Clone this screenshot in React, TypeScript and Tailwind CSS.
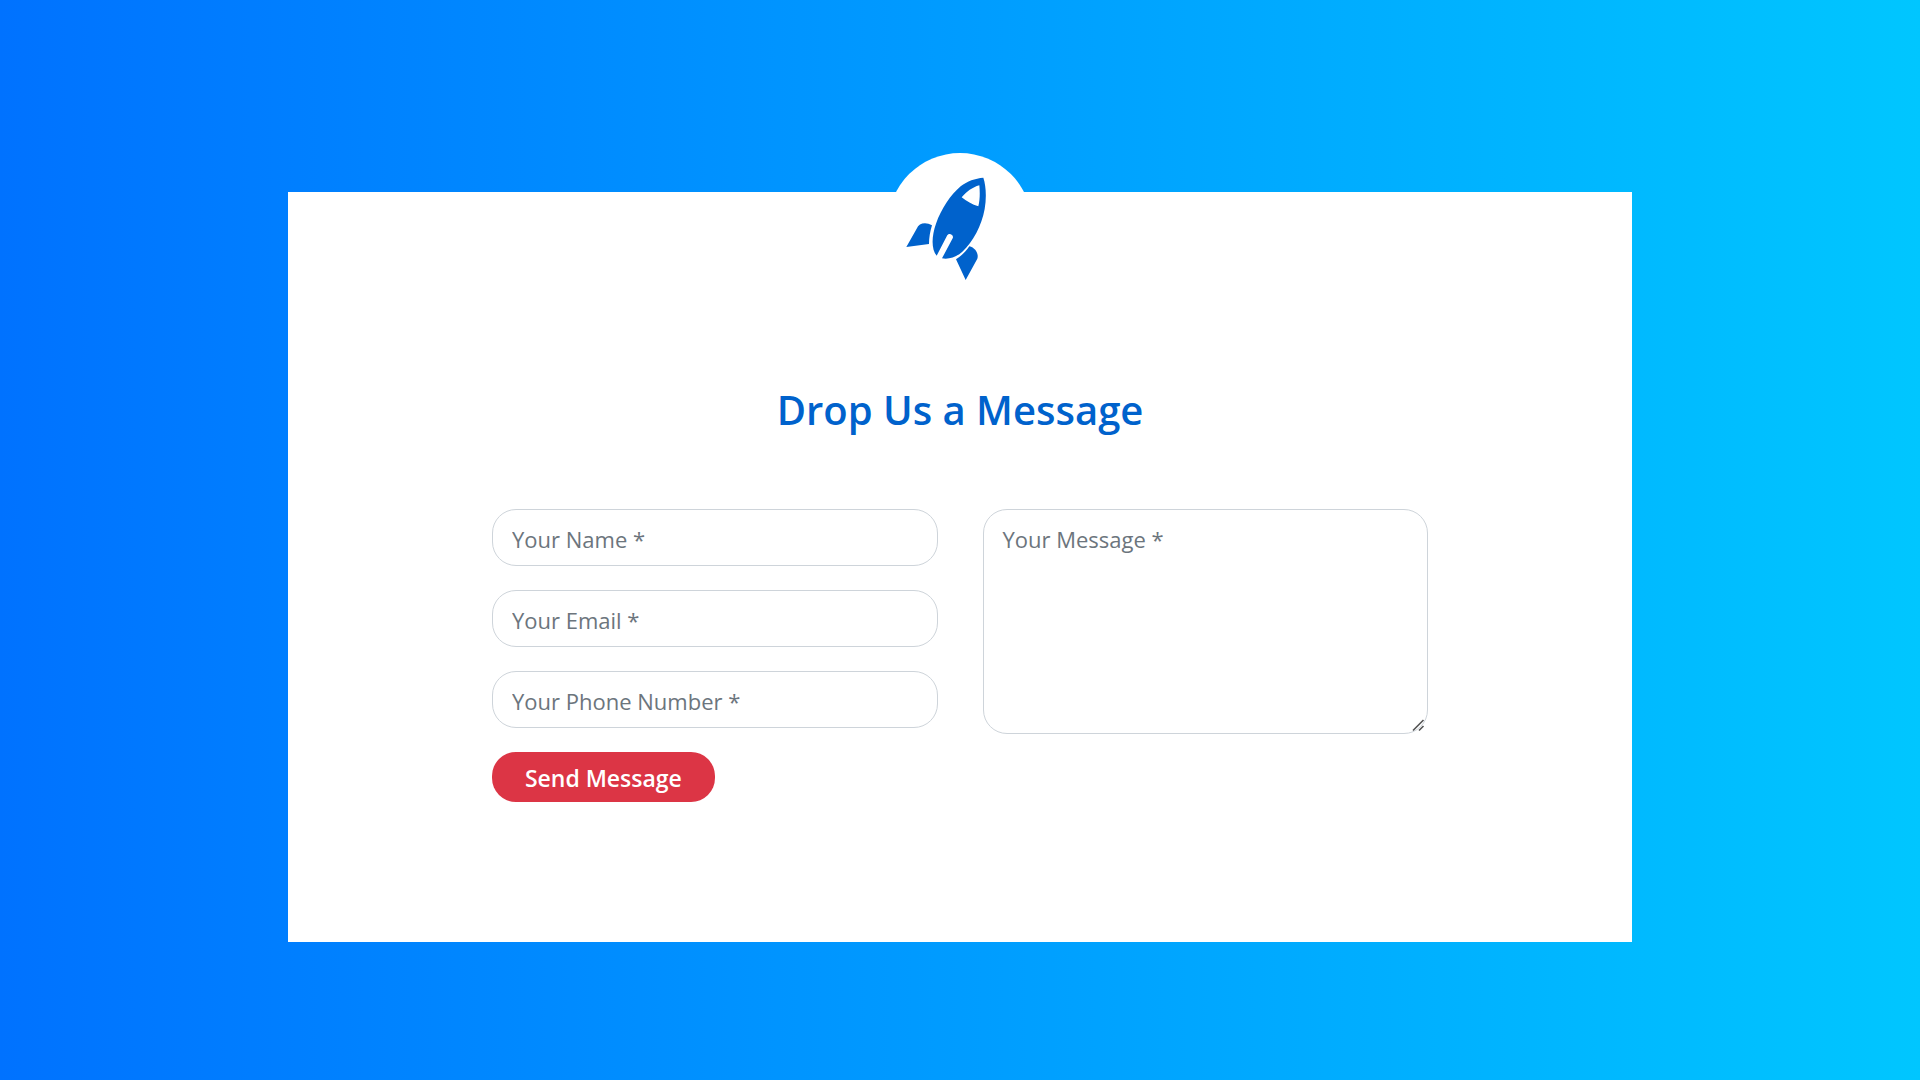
const fieldClass =
  'block w-full rounded-3xl border border-[#ced4da] bg-white px-[19px] text-[22px] leading-9 text-[#495057] placeholder:text-[#6c757d] placeholder:opacity-100 focus:outline-2 focus:outline-[#80bdff]';

const fields = [
  { id: 'name', label: 'Your Name *', type: 'text' },
  { id: 'email', label: 'Your Email *', type: 'text' },
  { id: 'phone', label: 'Your Phone Number *', type: 'text' },
];

function Rocket() {
  return (
    <svg viewBox="0 39 480 411" className="w-40 shrink-0" fill="#0062cc" aria-hidden="true">
      <path
        fillRule="evenodd"
        d="M310 113C318 137 320 172 314 207C305 257 279 306 247 335C229 351 207 359 186 355L218 295C223 284 206 276 201 287L170 347C153 327 155 287 168 251C184 207 212 164 242 139C262 123 285 115 310 113ZM298 136C277 142 260 155 245 172C259 184 277 194 295 199C300 178 300 157 298 136Z"
      />
      <path d="M79 321L110 266C117 249 137 245 156 256C150 276 147 293 147 312Z" />
      <path d="M228 358C244 348 257 335 268 319C285 323 297 340 292 356L257 420Z" />
    </svg>
  );
}

export default function App() {
  return (
    <main className="min-h-screen bg-linear-to-r/srgb from-[#0072ff] to-[#00c6ff] py-48 font-['Open_Sans',sans-serif]">
      <section className="mx-auto flex w-7/10 flex-col bg-white px-51 pb-35">
        <div className="mx-auto -mt-[39px] flex size-36 items-start justify-center rounded-full bg-white">
          <Rocket />
        </div>
        <form className="mt-22" onSubmit={(e) => e.preventDefault()}>
          <h1 className="mb-[74px] text-center text-[40px] font-semibold leading-[50px] text-[#0062cc]">
            Drop Us a Message
          </h1>
          <div className="grid grid-cols-2 items-start gap-x-[45px]">
            <div className="flex flex-col items-start gap-6">
              {fields.map((field) => (
                <input
                  key={field.id}
                  id={field.id}
                  name={field.id}
                  type={field.type}
                  placeholder={field.label}
                  aria-label={field.label}
                  className={fieldClass + ' h-[57px] pt-0.5'}
                />
              ))}
              <button
                type="submit"
                className="h-[50px] w-1/2 cursor-pointer rounded-3xl bg-[#dc3545] pt-0.5 text-[23px] font-semibold text-white"
              >
                Send Message
              </button>
            </div>
            <div className="relative">
              <textarea
                name="message"
                placeholder="Your Message *"
                aria-label="Your Message *"
                className={fieldClass + ' h-[225px] resize-y py-[11px] [&::-webkit-resizer]:bg-transparent'}
              />
              <svg
                viewBox="0 0 16 16"
                className="pointer-events-none absolute right-0 bottom-0 size-4"
                stroke="#555"
                strokeWidth="1.6"
                aria-hidden="true"
              >
                <path d="M1 12.5L11.5 2M7 12.5L11.5 8" />
              </svg>
            </div>
          </div>
        </form>
      </section>
    </main>
  );
}
